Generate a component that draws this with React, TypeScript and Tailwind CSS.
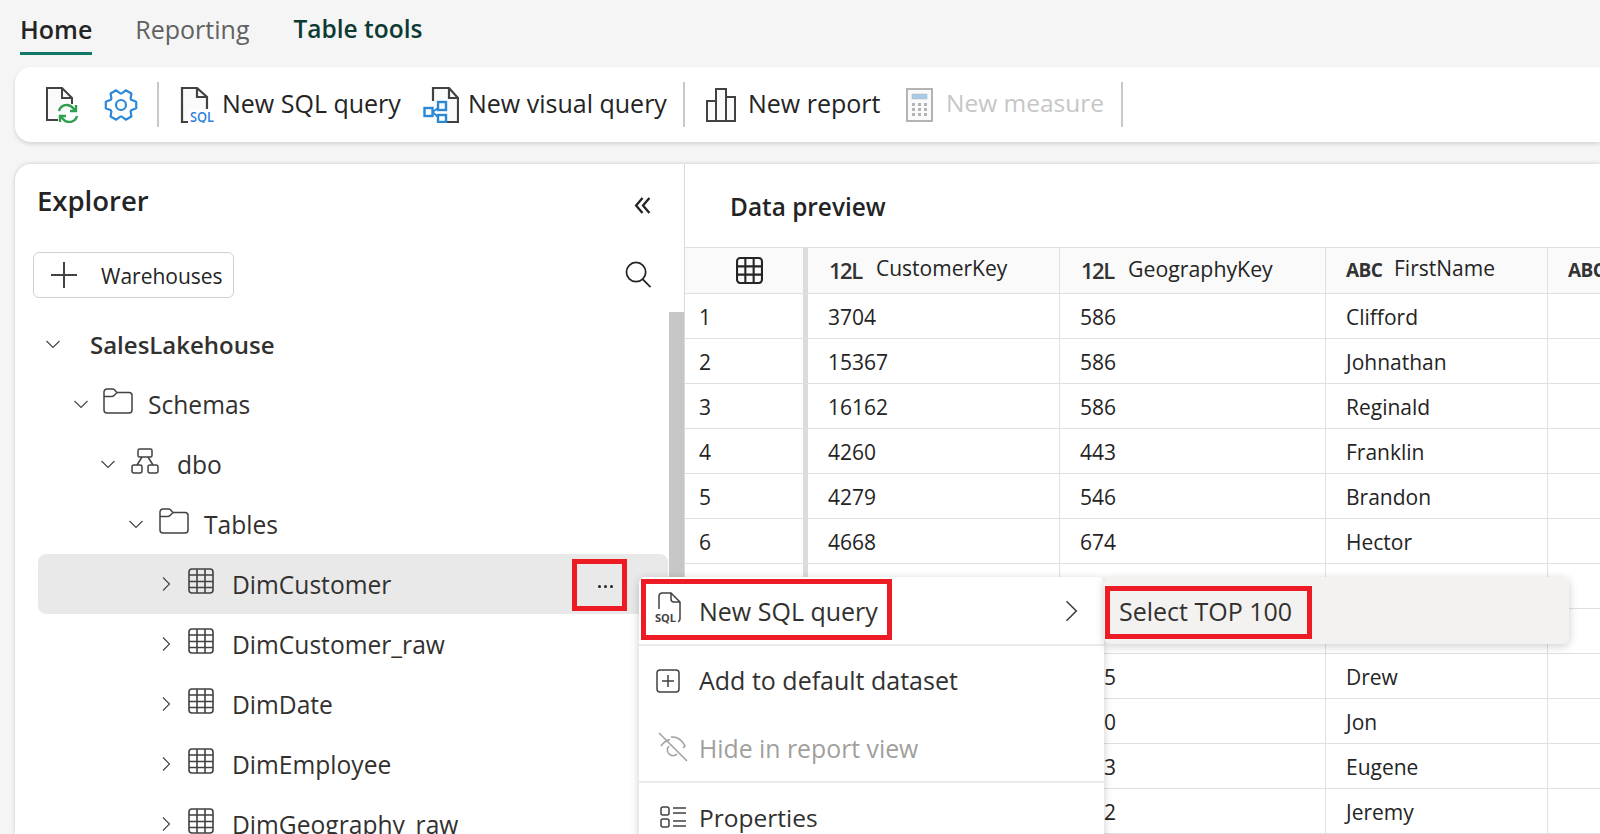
import React from "react";

const Chevron = ({ dir, className }: { dir: "down" | "right"; className?: string }) => (
  <svg viewBox="0 0 16 16" className={className} fill="none" stroke="#424242" strokeWidth="1.1">
    {dir === "down" ? <path d="M1.5 5l6.5 6.5L14.5 5" /> : <path d="M5 1.5L11.5 8 5 14.5" />}
  </svg>
);

const TableIcon = () => (
  <svg viewBox="0 0 26 26" className="w-[26px] h-[26px]" fill="none" stroke="#424242" strokeWidth="1.6">
    <rect x="1" y="1" width="24" height="24" rx="3" />
    <path d="M9 1v24M17 1v24M1 7h24M1 13.500h24M1 19.500h24" />
  </svg>
);

const FolderIcon = () => (
  <svg viewBox="0 0 30 26" className="w-[30px] h-[26px]" fill="none" stroke="#424242" strokeWidth="1.5">
    <path d="M1 4a3 3 0 0 1 3-3h5.500a3 3 0 0 1 2 .8L14 4.500h12a3 3 0 0 1 3 3V22a3 3 0 0 1-3 3H4a3 3 0 0 1-3-3V4z" />
    <path d="M1 8.500h8c1.200 0 2-.6 5-4" />
  </svg>
);

const SchemaIcon = () => (
  <svg viewBox="0 0 28 26" className="w-[28px] h-[26px]" fill="none" stroke="#424242" strokeWidth="1.5">
    <rect x="7" y="1" width="14" height="8" rx="1.500" />
    <rect x="1" y="17" width="10" height="8" rx="2" />
    <rect x="17" y="17" width="10" height="8" rx="2" />
    <path d="M11 9l-5 8M17 9l5 8" />
  </svg>
);

// six chunky teeth, one pointing left and one right
const gearPath = () => {
  const pt = (deg: number, r: number) => {
    const a = (deg * Math.PI) / 180;
    return `${(17 + r * Math.cos(a)).toFixed(1)} ${(16 + r * Math.sin(a)).toFixed(1)}`;
  };
  const parts = [0, 60, 120, 180, 240, 300].map((t) =>
    [pt(t - 27, 11.5), pt(t - 12, 15.5), pt(t + 12, 15.5), pt(t + 27, 11.5)].join("L")
  );
  return `M${parts.join("L")}Z`;
};

type TreeRowProps = {
  pl: string;
  label: string;
  open?: boolean;
  icon?: React.ReactNode;
  selected?: boolean;
  bold?: boolean;
  iconGap?: string;
};

const TreeRow = ({ pl, label, open, icon, selected, bold, iconGap }: TreeRowProps) => (
  <div className={`h-[60px] flex items-center rounded-lg ${pl} ${selected ? "bg-[#e9e9e9]" : ""}`}>
    <Chevron dir={open ? "down" : "right"} className="w-[16px] h-[16px] shrink-0 mr-[15px]" />
    {icon ? <span className={`-mt-[6px] flex shrink-0 ${iconGap}`}>{icon}</span> : null}
    <span className={bold ? "mt-[2px] text-[24px] font-semibold text-[#323130] ml-[14px]" : "mt-[2px] text-[24.600px] text-[#323130]"}>{label}</span>
  </div>
);

// rows 7 to 12 sit mostly under the context menu, only what shows is filled in
const rows = [
  ["1", "3704", "586", "Clifford"],
  ["2", "15367", "586", "Johnathan"],
  ["3", "16162", "586", "Reginald"],
  ["4", "4260", "443", "Franklin"],
  ["5", "4279", "546", "Brandon"],
  ["6", "4668", "674", "Hector"],
  ["", "", "", ""],
  ["", "", "", ""],
  ["", "", "5", "Drew"],
  ["", "", "0", "Jon"],
  ["", "", "3", "Eugene"],
  ["", "", "2", "Jeremy"],
];

const tableCols = "grid grid-cols-[118px_5px_252px_266px_222px_1fr]";

const RedBox = ({ className }: { className: string }) => (
  <div className={`absolute border-[5px] border-[#ed1c24] ${className}`} />
);

export default function App() {
  return (
    <div className="relative w-[1600px] h-[834px] overflow-hidden bg-[#f5f5f5] flex flex-col font-['Open_Sans',sans-serif] text-[#242424]">
      {/* Tabs */}
      <div className="h-[67px] shrink-0 flex pl-[20px] text-[25px]">
        <div className="h-[55px] flex items-end pb-[4px] border-b-[3px] border-[#117865] font-semibold text-[#242424]">Home</div>
        <div className="h-[55px] flex items-end pb-[7px] ml-[43px] text-[#616161]">Reporting</div>
        <div className="h-[55px] flex items-end pb-[7px] ml-[44px] text-[24.500px] font-semibold text-[#0c3b34]">Table tools</div>
      </div>

      {/* Ribbon */}
      <div className="ml-[15px] h-[75px] shrink-0 bg-white rounded-l-2xl shadow-[0_2px_4px_rgba(0,0,0,0.14)] flex items-center pl-[31px] text-[25px]">
        <svg viewBox="0 0 34 36" className="w-[34px] h-[36px]" fill="none">
          <path d="M12 33H1V1h15l10 10v6z" fill="#fafafa" />
          <path d="M12 33H1V1h15l10 10v6M16 1v10h10" stroke="#424242" strokeWidth="2" />
          <path d="M13 24a8 8 0 0 1 14-3l3 3M30 18v6h-6" stroke="#2e9e4f" strokeWidth="2.400" />
          <path d="M31 29a8 8 0 0 1-14 3l-3-3M14 35v-6h6" stroke="#2e9e4f" strokeWidth="2.400" />
        </svg>
        <svg viewBox="0 0 34 32" className="w-[34px] h-[32px] ml-[24px]" fill="none" stroke="#2b88d8" strokeWidth="2.200" strokeLinejoin="round">
          <path d={gearPath()} />
          <circle cx="17" cy="16" r="5" />
        </svg>
        <div className="w-[2px] h-[45px] bg-[#c8c8c8] ml-[19px] mr-[21px]" />
        <svg viewBox="0 0 34 36" className="w-[34px] h-[36px]" fill="none">
          <path d="M8 35H2V1h15l10 9v12H8z" fill="#fafafa" />
          <path d="M8 35H2V1h15l10 9v12M17 1v9h10" stroke="#424242" strokeWidth="2.200" />
          <text x="10" y="35" fontSize="15" fontWeight="600" fill="#2f7fdc" fontFamily="Open Sans" textLength="24" lengthAdjust="spacingAndGlyphs">SQL</text>
        </svg>
        <span className="ml-[8px] -mt-[2px] w-[178px] whitespace-nowrap">New SQL query</span>
        <svg viewBox="0 0 36 36" className="w-[36px] h-[36px] ml-[23px]" fill="none">
          <path d="M10 1h16l9 10v24H22V20H10z" fill="#fafafa" />
          <path d="M10 14V1h16l9 10v24H24M26 1v10h9" stroke="#424242" strokeWidth="2.200" />
          <rect x="1.500" y="21" width="8" height="8" stroke="#2b88d8" strokeWidth="2.400" />
          <rect x="15" y="15" width="8" height="8" stroke="#2b88d8" strokeWidth="2.400" />
          <rect x="15" y="28" width="8" height="7" stroke="#2b88d8" strokeWidth="2.400" />
          <path d="M9.500 25l5.500-4M9.500 25l5.500 5" stroke="#2b88d8" strokeWidth="2" />
        </svg>
        <span className="ml-[9px] -mt-[2px] w-[196px] whitespace-nowrap">New visual query</span>
        <div className="w-[2px] h-[45px] bg-[#c8c8c8] ml-[19px] mr-[21px]" />
        <svg viewBox="0 0 30 34" className="w-[30px] h-[34px]" fill="#fafafa" stroke="#424242" strokeWidth="2">
          <rect x="1" y="13" width="9" height="20" />
          <rect x="10" y="1" width="10" height="32" />
          <rect x="20" y="9" width="9" height="24" />
        </svg>
        <span className="ml-[12px] -mt-[2px] w-[131px] whitespace-nowrap">New report</span>
        <svg viewBox="0 0 27 34" className="w-[27px] h-[34px] ml-[27px]">
          <rect x="1" y="1" width="25" height="32" fill="#fafafa" stroke="#b4b4b4" strokeWidth="2" />
          <rect x="6" y="6" width="15" height="5" fill="#a6cbe8" stroke="#b4b4b4" strokeWidth="0.500" />
          <path d="M6 15h3v3H6zM12 15h3v3h-3zM18 15h3v3h-3zM6 20h3v3H6zM12 20h3v3h-3zM18 20h3v3h-3zM6 25h3v3H6zM12 25h3v3h-3zM18 25h3v3h-3z" fill="#b4b4b4" />
        </svg>
        <span className="ml-[13px] -mt-[2px] w-[156px] whitespace-nowrap text-[24.500px] text-[#c6c6c6]">New measure</span>
        <div className="w-[2px] h-[45px] bg-[#c8c8c8] ml-[19px]" />
      </div>

      {/* Main card */}
      <div className="mt-[22px] ml-[15px] flex-1 min-h-0 bg-white rounded-tl-2xl shadow-[0_0_4px_rgba(0,0,0,0.18)] flex">
        {/* Explorer */}
        <div className="relative w-[669px] shrink-0 flex flex-col">
          <div className="h-[88px] shrink-0 flex justify-between pl-[22px] pr-[33px]">
            <span className="mt-[16px] text-[27.500px] font-semibold text-[#242424]">Explorer</span>
            <svg viewBox="0 0 16 16" className="mt-[33px] w-[17px] h-[17px]" fill="none" stroke="#242424" strokeWidth="2.200">
              <path d="M8 1L2 8l6 7M14.500 1L8.500 8l6 7" />
            </svg>
          </div>
          <div className="h-[62px] shrink-0 flex justify-between items-start pl-[18px] pr-[32px]">
            <div className="w-[201px] h-[46px] border border-[#d1d1d1] rounded-md flex items-center pl-[16px] text-[21px]">
              <svg viewBox="0 0 28 28" className="w-[28px] h-[28px] mr-[23px]" fill="none" stroke="#424242" strokeWidth="2">
                <path d="M14 1v26M1 14h26" />
              </svg>
              <span className="mt-[3px]">Warehouses</span>
            </div>
            <svg viewBox="0 0 28 28" className="mt-[9px] w-[28px] h-[27px]" fill="none" stroke="#242424" strokeWidth="1.800">
              <circle cx="12" cy="11.500" r="10" />
              <path d="M19 19l8 8" />
            </svg>
          </div>
          <div className="ml-[23px] w-[630px] flex flex-col">
            <TreeRow pl="pl-[7px]" label="SalesLakehouse" open bold />
            <TreeRow pl="pl-[35px]" label="Schemas" open icon={<FolderIcon />} iconGap="-ml-[1px] mr-[15px]" />
            <TreeRow pl="pl-[62px]" label="dbo" open icon={<SchemaIcon />} iconGap="mr-[18px]" />
            <TreeRow pl="pl-[90px]" label="Tables" open icon={<FolderIcon />} iconGap="mr-[15px]" />
            <TreeRow pl="pl-[120px]" label="DimCustomer" selected icon={<TableIcon />} iconGap="-ml-[1px] mr-[18px]" />
            <TreeRow pl="pl-[120px]" label="DimCustomer_raw" icon={<TableIcon />} iconGap="-ml-[1px] mr-[18px]" />
            <TreeRow pl="pl-[120px]" label="DimDate" icon={<TableIcon />} iconGap="-ml-[1px] mr-[18px]" />
            <TreeRow pl="pl-[120px]" label="DimEmployee" icon={<TableIcon />} iconGap="-ml-[1px] mr-[18px]" />
            <TreeRow pl="pl-[120px]" label="DimGeography_raw" icon={<TableIcon />} iconGap="-ml-[1px] mr-[18px]" />
          </div>
          <div className="absolute right-0 top-[148px] w-[15px] h-[400px] bg-[#c7c7c7]" />
        </div>

        {/* Data preview */}
        <div className="flex-1 min-w-0 border-l border-[#d9d9d9] flex flex-col">
          <div className="h-[83px] shrink-0 pl-[45px] pt-[24px] text-[24.400px] font-semibold leading-[38px] text-[#242424]">Data preview</div>
          <div className={`${tableCols} h-[47px] shrink-0 bg-[#fafafa] border-t border-b border-[#e0e0e0]`}>
            <div className="flex items-center justify-center pl-[10px]">
              <svg viewBox="0 0 26 26" className="w-[27px] h-[27px]" fill="none" stroke="#242424" strokeWidth="2">
                <rect x="1" y="1" width="24" height="24" rx="3" />
                <path d="M9 1v24M17 1v24M1 9h24M1 17h24" />
              </svg>
            </div>
            <div className="bg-[#dcdcdc]" />
            <div className="flex items-center pl-[21px] border-r border-[#e0e0e0]">
              <span className="w-[47px] text-[22px] font-semibold tracking-[-1.500px] text-[#333333]">12L</span>
              <span className="text-[21px] -mt-[3px]">CustomerKey</span>
            </div>
            <div className="flex items-center pl-[21px] border-r border-[#e0e0e0]">
              <span className="w-[47px] text-[22px] font-semibold tracking-[-1.500px] text-[#333333]">12L</span>
              <span className="text-[21.300px] -mt-[4px]">GeographyKey</span>
            </div>
            <div className="flex items-center pl-[20px] border-r border-[#e0e0e0]">
              <span className="w-[48px] text-[19px] font-bold tracking-[-0.500px] text-[#333333]">ABC</span>
              <span className="text-[21px] -mt-[3px]">FirstName</span>
            </div>
            <div className="flex items-center pl-[20px]">
              <span className="text-[19px] font-bold tracking-[-0.500px] text-[#333333]">ABC</span>
            </div>
          </div>
          {rows.map((r, i) => (
            <div key={i} className={`${tableCols} h-[45px] shrink-0 border-b border-[#e0e0e0] text-[21px]`}>
              <div className="flex items-center pl-[14px] pt-[3px]">{r[0]}</div>
              <div className="bg-[#dcdcdc]" />
              <div className="flex items-center pl-[20px] pt-[3px] border-r border-[#e0e0e0]">{r[1]}</div>
              <div className={`flex items-center ${i > 7 ? "pl-[44px]" : "pl-[20px]"} pt-[3px] border-r border-[#e0e0e0]`}>{r[2]}</div>
              <div className="flex items-center pl-[20px] pt-[3px] border-r border-[#e0e0e0]">{r[3]}</div>
              <div />
            </div>
          ))}
        </div>
      </div>

      {/* Row dots */}
      <div className="absolute left-[598px] top-[585px] flex gap-[3px]">
        <span className="w-[3px] h-[3px] rounded-full bg-[#242424]" />
        <span className="w-[3px] h-[3px] rounded-full bg-[#242424]" />
        <span className="w-[3px] h-[3px] rounded-full bg-[#242424]" />
      </div>

      {/* Context menu */}
      <div className="absolute left-[639px] top-[577px] w-[465px] h-[280px] bg-white rounded-md shadow-[0_2px_10px_rgba(0,0,0,0.2)] flex flex-col text-[24.800px] text-[#323130]">
        <div className="h-[69px] shrink-0 flex items-center pl-[16px] pr-[28px] border-b-2 border-[#edebe9]">
          <svg viewBox="0 0 28 32" className="w-[28px] h-[32px] mr-[16px] -mt-[6px]" fill="none">
            <path d="M4 17V4a3 3 0 0 1 3-3h9l9 9v17a3 3 0 0 1-2 2.800M16 1v6a3 3 0 0 0 3 3h6" stroke="#424242" strokeWidth="1.500" />
            <text x="0" y="30" fontSize="11" fontWeight="700" fill="#424242" fontFamily="Open Sans">SQL</text>
          </svg>
          <span className="mt-[2px] text-[25px]">New SQL query</span>
          <Chevron dir="right" className="ml-auto w-[24px] h-[24px] -mr-[7px]" />
        </div>
        <div className="h-[69px] shrink-0 flex items-center pl-[17px]">
          <svg viewBox="0 0 24 24" className="w-[24px] h-[24px] mr-[19px]" fill="none" stroke="#424242" strokeWidth="1.500">
            <rect x="1" y="1" width="22" height="22" rx="3" />
            <path d="M12 6v12M6 12h12" />
          </svg>
          <span className="mt-[1px] text-[25px]">Add to default dataset</span>
        </div>
        <div className="h-[68px] shrink-0 flex items-center pl-[19px] border-b-2 border-[#edebe9] text-[#a19f9d]">
          <svg viewBox="0 0 30 30" className="w-[30px] h-[30px] mr-[11px] -mt-[3px]" fill="none" stroke="#a19f9d" strokeWidth="1.500">
            <path d="M1 1l28 28M3 14c3-4 6-6 9-6.500M13 5c6-.5 11 3 14 9l-2 2M11 14a5.500 5.500 0 0 0 8 8" />
          </svg>
          <span className="mt-[2px]">Hide in report view</span>
        </div>
        <div className="h-[68px] shrink-0 flex items-center pl-[21px]">
          <svg viewBox="0 0 26 22" className="w-[26px] h-[22px] mr-[13px]" fill="none" stroke="#424242" strokeWidth="1.500">
            <rect x="1" y="1" width="8" height="8" rx="2" />
            <rect x="1" y="13" width="8" height="8" rx="2" />
            <path d="M13 2h13M13 7h13M13 15h13M13 20h13" />
          </svg>
          <span className="mt-[2px] text-[24.500px]">Properties</span>
        </div>
      </div>

      {/* Submenu */}
      <div className="absolute left-[1104px] top-[577px] w-[465px] h-[67px] bg-[#f3f2f1] rounded-md shadow-[0_2px_10px_rgba(0,0,0,0.2)] flex items-center pl-[15px] pt-[2px] text-[25px] text-[#323130]">
        Select TOP 100
      </div>

      {/* Annotation boxes */}
      <RedBox className="left-[572px] top-[559px] w-[55px] h-[52px]" />
      <RedBox className="left-[641px] top-[579px] w-[251px] h-[61px]" />
      <RedBox className="left-[1105px] top-[586px] w-[207px] h-[53px]" />
    </div>
  );
}
